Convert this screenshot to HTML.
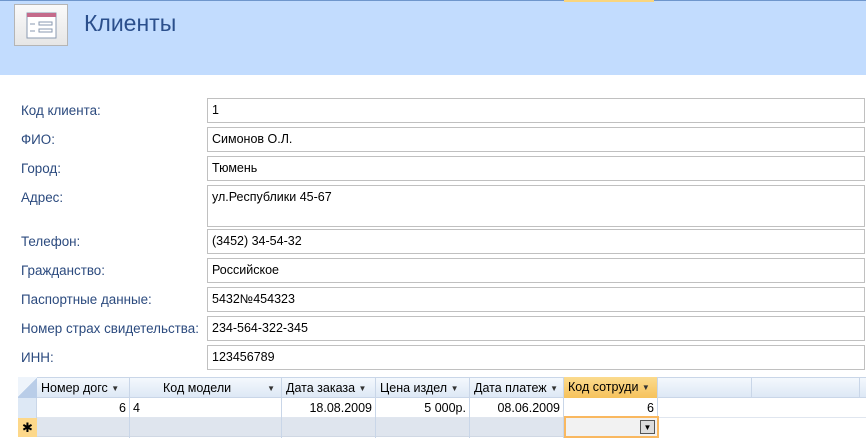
<!DOCTYPE html>
<html><head><meta charset="utf-8"><style>
*{margin:0;padding:0;box-sizing:border-box}
body{width:866px;height:444px;overflow:hidden;background:#fff;font-family:"Liberation Sans",sans-serif;position:relative}
.hdr{position:absolute;left:0;top:0;width:866px;height:75px;background:#c2dcfe;border-top:1px solid #6e96cc}
.org{position:absolute;left:564px;top:0;width:90px;height:2px;background:#f9d57e}
.ico{position:absolute;left:14px;top:4px;width:54px;height:42px;background:linear-gradient(#fafafa,#e6e6e6);border:1px solid #b5b5b5}
.ttl{position:absolute;left:84px;top:10px;font-size:23px;color:#2b4f8c}
.lb{position:absolute;left:21px;font-size:13.4px;color:#2b4a7e}
.f{position:absolute;left:207px;width:658px;border:1px solid #c0c0c0;font-size:12.5px;color:#000;padding:4px 0 0 4px;height:25px}
.g{position:absolute;left:18px;top:377px;width:848px;height:67px}
.c{position:absolute;font-size:12.5px;white-space:nowrap;overflow:hidden;height:20px;line-height:20px;border-right:1px solid #c9d6e8}
.a{font-size:8px;vertical-align:1px;color:#333}
</style></head><body>
<div class="hdr"></div><div class="org"></div>
<div class="ico"><svg width="52" height="40" viewBox="0 0 52 40"><rect x="12" y="8" width="29" height="25" fill="#fff" stroke="#8a9ab0"/><rect x="12" y="8" width="29" height="4" fill="#c46a8a"/><line x1="15" y1="19" x2="20" y2="19" stroke="#8a9ab0"/><rect x="24" y="17" width="13" height="3" fill="none" stroke="#8a9ab0"/><line x1="15" y1="26" x2="20" y2="26" stroke="#8a9ab0"/><rect x="24" y="24" width="13" height="3" fill="none" stroke="#8a9ab0"/></svg></div>
<div class="ttl">Клиенты</div>

<div class="lb" style="top:103px">Код клиента:</div><div class="f" style="top:98px">1</div>
<div class="lb" style="top:132px">ФИО:</div><div class="f" style="top:127px">Симонов О.Л.</div>
<div class="lb" style="top:161px">Город:</div><div class="f" style="top:156px">Тюмень</div>
<div class="lb" style="top:190px">Адрес:</div><div class="f" style="top:185px;height:42px">ул.Республики 45-67</div>
<div class="lb" style="top:234px">Телефон:</div><div class="f" style="top:229px">(3452) 34-54-32</div>
<div class="lb" style="top:263px">Гражданство:</div><div class="f" style="top:258px">Российское</div>
<div class="lb" style="top:292px">Паспортные данные:</div><div class="f" style="top:287px">5432№454323</div>
<div class="lb" style="top:321px">Номер страх свидетельства:</div><div class="f" style="top:316px">234-564-322-345</div>
<div class="lb" style="top:350px">ИНН:</div><div class="f" style="top:345px">123456789</div>

<div class="g">
<div style="position:absolute;left:0;top:0;width:848px;height:21px;background:linear-gradient(#f4f8fd,#dde8f5);border-top:1px solid #c9d6e8;border-bottom:1px solid #c9d6e8"></div>
<div style="position:absolute;left:0;top:21px;width:848px;height:20px;border-bottom:1px solid #e0e6ef"></div>
<div style="position:absolute;left:0;top:41px;width:640px;height:19px;background:#dfe5ee;border-bottom:1px solid #d0d8e4"></div>
<div style="position:absolute;left:0;top:0;width:19px;height:21px;background:linear-gradient(135deg,#eef4fb 50%,#b9cde8 50%)"></div>
<div style="position:absolute;left:0;top:21px;width:19px;height:20px;background:#dde8f5;border-right:1px solid #c9d6e8"></div>
<div style="position:absolute;left:0;top:41px;width:19px;height:19px;background:#fdd88a;font-size:13px;text-align:center;line-height:19px">✱</div>
<div class="c" style="left:19px;top:1px;width:93px;padding-left:4px">Номер догс <span class="a">▼</span></div>
<div class="c" style="left:112px;top:1px;width:152px;padding-left:33px">Код модели<span class="a" style="position:absolute;right:6px;top:1px">▼</span></div>
<div class="c" style="left:264px;top:1px;width:94px;padding-left:4px">Дата заказа <span class="a">▼</span></div>
<div class="c" style="left:358px;top:1px;width:94px;padding-left:4px">Цена издел <span class="a">▼</span></div>
<div class="c" style="left:452px;top:1px;width:94px;padding-left:4px">Дата платеж <span class="a">▼</span></div>
<div class="c" style="left:546px;top:0;width:94px;height:21px;padding-left:4px;background:linear-gradient(#fbdb8e,#f6c25c)">Код сотруди <span class="a">▼</span></div>
<div class="c" style="left:640px;top:1px;width:94px"></div>
<div class="c" style="left:734px;top:1px;width:108px"></div>
<div class="c" style="left:19px;top:21px;width:93px;text-align:right;padding-right:3px">6</div>
<div class="c" style="left:112px;top:21px;width:152px;padding-left:3px">4</div>
<div class="c" style="left:264px;top:21px;width:94px;text-align:right;padding-right:3px">18.08.2009</div>
<div class="c" style="left:358px;top:21px;width:94px;text-align:right;padding-right:3px">5 000р.</div>
<div class="c" style="left:452px;top:21px;width:94px;text-align:right;padding-right:3px">08.06.2009</div>
<div class="c" style="left:546px;top:21px;width:94px;text-align:right;padding-right:3px">6</div>
<div class="c" style="left:19px;top:41px;width:93px"></div>
<div class="c" style="left:112px;top:41px;width:152px"></div>
<div class="c" style="left:264px;top:41px;width:94px"></div>
<div class="c" style="left:358px;top:41px;width:94px"></div>
<div class="c" style="left:452px;top:41px;width:94px"></div>
<div style="position:absolute;left:546px;top:39px;width:95px;height:22px;border:2px solid #f9b860;background:#f2f2f2"><div style="position:absolute;right:2px;top:2px;width:15px;height:14px;border:1px solid #555;background:#ddd;font-size:8px;text-align:center;line-height:13px">▼</div></div>
</div>
</body></html>
